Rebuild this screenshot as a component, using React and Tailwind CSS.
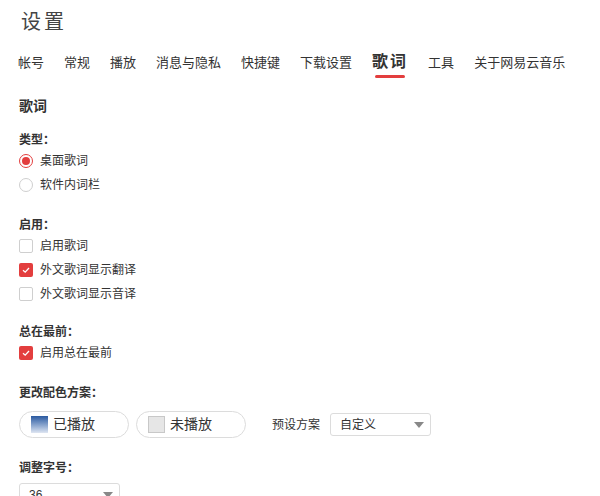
import React from "react"

const font = { fontFamily: '"Liberation Sans", "Noto Sans CJK SC", sans-serif' }

const tabs = ["帐号", "常规", "播放", "消息与隐私", "快捷键", "下载设置", "歌词", "工具", "关于网易云音乐"]

const Check = ({ checked, label }) => (
  <label className="flex items-center h-[24px] text-[12px] text-[#333]">
    <span
      className={
        checked
          ? "w-[14px] h-[14px] rounded-[2px] bg-[#e33e3e] flex items-center justify-center"
          : "w-[14px] h-[14px] rounded-[2px] border border-[#cfcfcf] bg-white"
      }
    >
      {checked && (
        <svg width="10" height="10" viewBox="0 0 10 10">
          <path d="M2 5.2 L4.2 7.2 L8 3" stroke="#fff" strokeWidth="1.3" fill="none" />
        </svg>
      )}
    </span>
    <span className="ml-[7px]">{label}</span>
  </label>
)

const Radio = ({ checked, label }) => (
  <label className="flex items-center h-[24px] text-[12px] text-[#333]">
    {checked ? (
      <span className="w-[14px] h-[14px] rounded-full border border-[#e33e3e] flex items-center justify-center">
        <span className="w-[8px] h-[8px] rounded-full bg-[#e33e3e]" />
      </span>
    ) : (
      <span className="w-[14px] h-[14px] rounded-full border border-[#cfcfcf]" />
    )}
    <span className="ml-[7px]">{label}</span>
  </label>
)

const Label = ({ children, className = "" }) => (
  <div className={"text-[12px] font-bold text-[#333] h-[18px] leading-[18px] " + className}>{children}</div>
)

const Arrow = () => (
  <svg width="10" height="6" viewBox="0 0 10 6">
    <path d="M0 0 H10 L5 6 Z" fill="#888" />
  </svg>
)

const App = () => {
  return (
    <div className="w-[600px] h-[496px] overflow-hidden bg-white" style={font}>
      <div className="pl-[21px] pt-[9px] text-[20px] text-[#444] tracking-[3px] leading-[26px]">设置</div>

      <div className="flex items-end pl-[18px] mt-[14px] h-[24px] whitespace-nowrap">
        {tabs.map((t) => (
          <div key={t} className="mr-[20px] relative shrink-0">
            {t === "歌词" ? (
              <div className="text-[16px] font-bold text-[#333] leading-[22px] tracking-[2px]">
                {t}
                <div className="absolute left-[3px] right-[3px] -bottom-[5px] h-[3px] bg-[#e33e3e] rounded-full" />
              </div>
            ) : (
              <div className="text-[13px] text-[#333] leading-[20px]">{t}</div>
            )}
          </div>
        ))}
      </div>

      <div className="pl-[19px] mt-[23px]">
        <div className="text-[14px] font-bold text-[#333] leading-[20px]">歌词</div>

        <Label className="mt-[15px]">类型：</Label>
        <Radio checked label="桌面歌词" />
        <Radio label="软件内词栏" />

        <Label className="mt-[19px]">启用：</Label>
        <Check label="启用歌词" />
        <Check checked label="外文歌词显示翻译" />
        <Check label="外文歌词显示音译" />

        <Label className="mt-[17px]">总在最前：</Label>
        <Check checked label="启用总在最前" />

        <Label className="mt-[19px]">更改配色方案：</Label>
        <div className="flex items-center mt-[9px]">
          <div className="w-[110px] h-[27px] rounded-full border border-[#dcdcdc] flex items-center pl-[11px]">
            <span className="w-[17px] h-[17px] bg-gradient-to-b from-[#2a5aa0] to-[#dfe6f2]" />
            <span className="ml-[5px] text-[14px] text-[#333]">已播放</span>
          </div>
          <div className="w-[110px] h-[27px] rounded-full border border-[#dcdcdc] flex items-center pl-[11px] ml-[7px]">
            <span className="w-[17px] h-[17px] bg-[#e6e6e6] border border-[#c8c8c8]" />
            <span className="ml-[5px] text-[14px] text-[#333]">未播放</span>
          </div>
          <span className="ml-[26px] text-[12px] text-[#333]">预设方案</span>
          <div className="ml-[10px] w-[101px] h-[23px] rounded-[3px] border border-[#dcdcdc] flex items-center justify-between pl-[9px] pr-[6px]">
            <span className="text-[12px] text-[#333]">自定义</span>
            <Arrow />
          </div>
        </div>

        <Label className="mt-[21px]">调整字号：</Label>
        <div className="mt-[6px] w-[101px] h-[23px] rounded-[3px] border border-[#dcdcdc] flex items-center justify-between pl-[9px] pr-[6px]">
          <span className="text-[12px] text-[#333]">36</span>
          <Arrow />
        </div>
      </div>
    </div>
  )
}

export default App
